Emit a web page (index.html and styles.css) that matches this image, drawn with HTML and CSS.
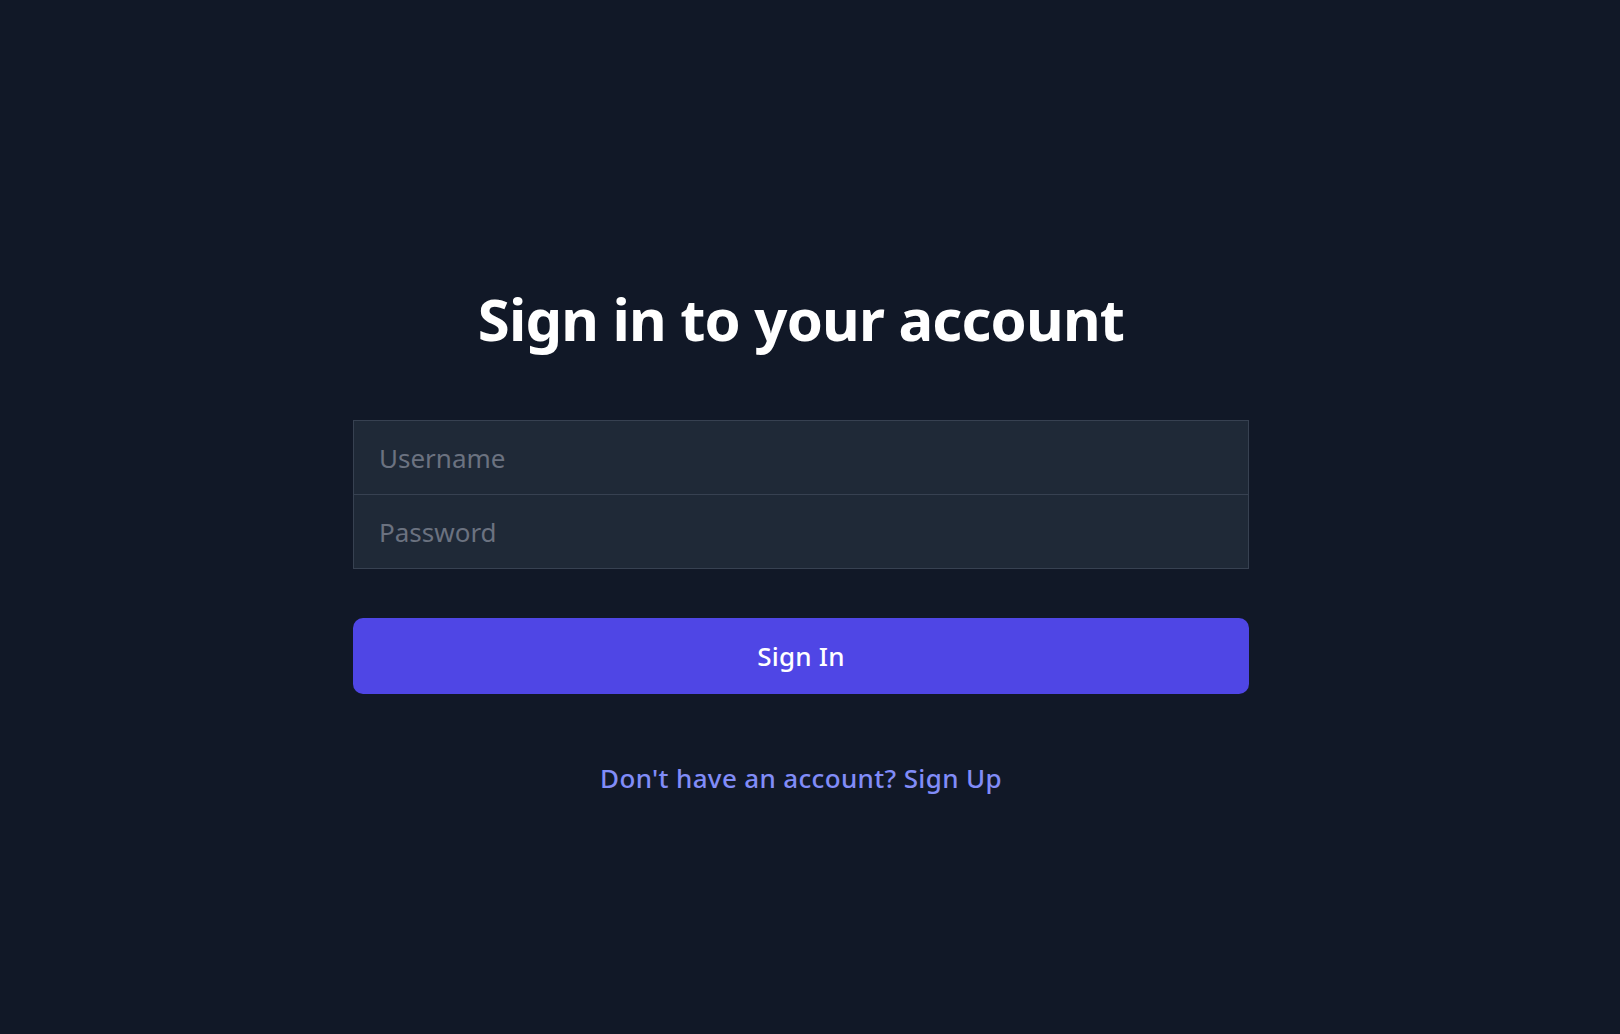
FILE: index.html
```html
<!DOCTYPE html>
<html lang="en">
<head>
<meta charset="utf-8">
<title>Sign in</title>
<link rel="stylesheet" href="styles.css">
</head>
<body>
<main class="page">
  <section class="card">
    <h1 class="title">Sign in to your account</h1>
    <form class="form">
      <div class="fields">
        <input class="field" type="text" placeholder="Username">
        <input class="field field-last" type="password" placeholder="Password">
      </div>
      <button class="submit" type="button">Sign In</button>
    </form>
    <p class="switch"><a class="switch-link" href="#">Don't have an account? Sign Up</a></p>
  </section>
</main>
</body>
</html>
```

FILE: styles.css
```css
* { box-sizing: border-box; }
html, body { margin: 0; padding: 0; }
body {
  background: #111827;
  font-family: "Noto Sans", "Open Sans", sans-serif;
  color: #ffffff;
}
.page {
  min-height: 100vh;
  display: flex;
  justify-content: center;
  padding-top: 283px;
  padding-right: 18px;
}
.card {
  width: 896px;
}
.title {
  margin: 0;
  font-size: 58px;
  line-height: 72px;
  letter-spacing: -0.8px;
  font-weight: 700;
  text-align: center;
  color: #ffffff;
}
.form {
  margin-top: 65px;
}
.fields {
  display: flex;
  flex-direction: column;
}
.field {
  display: block;
  width: 100%;
  height: 75px;
  margin: 0;
  padding: 0 25px;
  background: #1f2937;
  border: 1px solid #374151;
  color: #e5e7eb;
  font-family: inherit;
  font-size: 26px;
  outline: none;
}
.field-last { margin-top: -1px; }
.field::placeholder { color: #6b7280; opacity: 1; }
.submit {
  display: block;
  width: 100%;
  height: 76px;
  margin-top: 49px;
  border: 0;
  border-radius: 10px;
  background: #4f46e5;
  color: #ffffff;
  font-family: inherit;
  font-size: 26px;
  letter-spacing: 0.2px;
  font-weight: 500;
  cursor: pointer;
}
.switch {
  margin: 66px 0 0;
  text-align: center;
  font-size: 26px;
  line-height: 36px;
}
.switch-link {
  color: #818cf8;
  font-weight: 500;
  letter-spacing: 0.35px;
  text-decoration: none;
}
```
